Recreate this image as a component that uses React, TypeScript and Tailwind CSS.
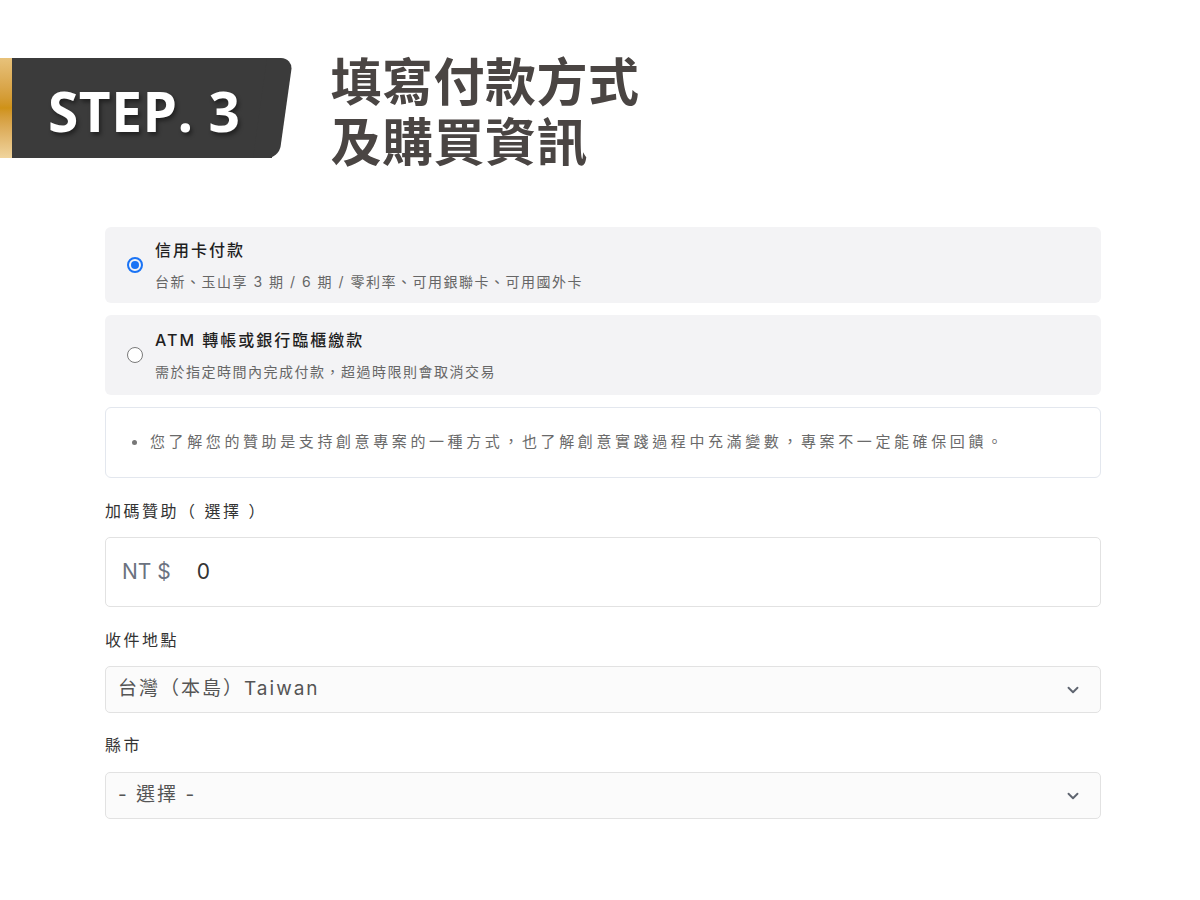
import { ChevronDown } from "lucide-react";

const cjk = { fontFamily: 'Inter, "Noto Sans CJK TC", sans-serif' };

const Radio = ({ checked }: { checked?: boolean }) =>
    checked ? (
        <div className="w-4 h-4 rounded-full border-2 border-[#1a73f5] flex items-center justify-center shrink-0">
            <div className="w-2 h-2 rounded-full bg-[#1a73f5]"></div>
        </div>
    ) : (
        <div className="w-4 h-4 rounded-full border border-[#7a7a7a] bg-white shrink-0"></div>
    );

const PayOption = ({ title, desc, checked, h }: { title: string; desc: string; checked?: boolean; h: string }) => (
    <div className={`flex items-center gap-3 bg-[#f3f3f5] rounded-md pl-[22px] ${h}`}>
        <Radio checked={checked} />
        <div className="flex flex-col gap-[14px]">
            <div className="text-[16px] leading-5 font-medium text-[#1f1f1f] tracking-[2px]">{title}</div>
            <div className="text-[14px] leading-4 text-[#666] tracking-[1.5px]">{desc}</div>
        </div>
    </div>
);

const SelectBox = ({ value }: { value: string }) => (
    <div className="h-[47px] flex items-center justify-between border border-[#e2e2e2] rounded-[5px] bg-[#fbfbfb] pl-3 pr-[18px]">
        <span className="text-[19px] text-[#555] tracking-[2px]">{value}</span>
        <ChevronDown className="w-[18px] h-[18px] text-[#5f6570]" strokeWidth={2.5} />
    </div>
);

const App = () => {
    return (
        <div className="min-h-screen bg-white" style={cjk}>
            <div className="flex items-center gap-[44px] pt-[47px]">
                <div className="flex items-stretch h-[100px]">
                    <div className="w-3 bg-gradient-to-b from-[#e8c27a] via-[#cf9216] to-[#f0d49d]"></div>
                    <div className="bg-[#3b3b3b] flex items-center pl-[36px] pr-[32px] pt-[4px]">
                        <span
                            className="text-white font-bold text-[55px] leading-none tracking-[0.5px] [text-shadow:2px_3px_4px_rgba(0,0,0,0.45)]"
                            style={{ fontFamily: '"Open Sans", sans-serif' }}
                        >
                            STEP. 3
                        </span>
                    </div>
                    <div className="w-[26px] -ml-[12px] bg-[#3b3b3b] rounded-r-[12px] skew-x-[-8deg]"></div>
                </div>
                <div className="text-[51px] leading-[60px] font-bold text-[#4a4543] tracking-[0.5px] pt-[2px]" style={{ fontFamily: '"Noto Sans CJK TC", sans-serif' }}>
                    <div>填寫付款方式</div>
                    <div>及購買資訊</div>
                </div>
            </div>

            <div className="ml-[105px] w-[996px] mt-[58px] flex flex-col">
                <div className="flex flex-col gap-3">
                    <PayOption
                        checked
                        h="h-[76px]"
                        title="信用卡付款"
                        desc="台新、玉山享 3 期 / 6 期 / 零利率、可用銀聯卡、可用國外卡"
                    />
                    <PayOption
                        h="h-[80px]"
                        title="ATM 轉帳或銀行臨櫃繳款"
                        desc="需於指定時間內完成付款，超過時限則會取消交易"
                    />
                    <div className="h-[71px] border border-[#e3e7ee] rounded-md flex items-center pl-[26px] gap-[13px]">
                        <div className="w-[5px] h-[5px] rounded-full bg-[#777]"></div>
                        <span className="text-[15px] text-[#6a6a6a] tracking-[3.6px]">
                            您了解您的贊助是支持創意專案的一種方式，也了解創意實踐過程中充滿變數，專案不一定能確保回饋。
                        </span>
                    </div>
                </div>

                <div className="mt-[21px] text-[16px] text-[#333] tracking-[2.5px] leading-6">加碼贊助（ 選擇 ）</div>
                <div className="mt-[14px] h-[70px] border border-[#e2e2e2] rounded-[5px] flex items-center pl-4 gap-[26px]">
                    <span className="text-[21px] text-[#6b7280]">NT $</span>
                    <span className="text-[21px] text-[#333]">0</span>
                </div>

                <div className="mt-[21px] text-[16px] text-[#333] tracking-[2.5px] leading-6">收件地點</div>
                <div className="mt-[14px]">
                    <SelectBox value="台灣（本島）Taiwan" />
                </div>

                <div className="mt-[20px] text-[16px] text-[#333] tracking-[2.5px] leading-6">縣市</div>
                <div className="mt-[15px]">
                    <SelectBox value="- 選擇 -" />
                </div>
            </div>
        </div>
    );
};

export default App;
